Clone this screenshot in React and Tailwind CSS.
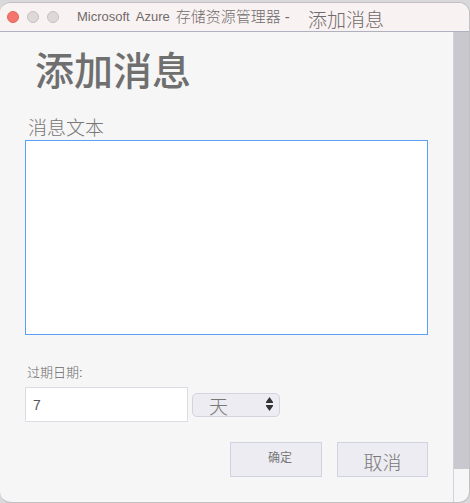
import React, { useState } from 'react'

const TitleBar = () => {
  return (
    <header className="flex h-[29px] items-start bg-[#f9f2f2] border-b border-[#afb1bf] pl-[7px]">
      <div className="flex gap-2 pt-2">
        <button type="button" aria-label="Close" className="size-3 rounded-full border border-[#e2645b] bg-[#f4756b]"></button>
        <button type="button" aria-label="Minimize" className="size-3 rounded-full border border-[#c8c1c1] bg-[#ded8d8]"></button>
        <button type="button" aria-label="Zoom" className="size-3 rounded-full border border-[#c8c1c1] bg-[#ded8d8]"></button>
      </div>
      <div className="flex items-start whitespace-nowrap pl-[18px] font-light text-[#6f6b6b]">
        <span className="flex gap-[6px] pt-1 text-[13px] leading-5">
          <span>Microsoft</span>
          <span>Azure</span>
          <span className="text-[15px]">存储资源管理器 -</span>
        </span>
        <span className="pl-[18px] pt-[6px] text-[19px] leading-6">添加消息</span>
      </div>
    </header>
  )
}

const UnitSelect = ({ value, onChange }) => {
  return (
    <div className="relative w-[88px]">
      <select
        aria-label="单位"
        value={value}
        onChange={onChange}
        className="block h-6 w-full appearance-none rounded-[5px] border border-[#d3d4e0] bg-[#edecf2] pl-4 pt-1 text-[19px] leading-5 font-light text-[#777]"
      >
        <option value="days">天</option>
      </select>
      <svg className="pointer-events-none absolute right-[7px] top-1" width="7" height="14" viewBox="0 0 7 14" fill="#333">
        <path d="M3.5 0 L7 5 V6 H0 V5 Z" />
        <path d="M3.5 14 L7 9 V8 H0 V9 Z" />
      </svg>
    </div>
  )
}

const App = () => {
  const [message, setMessage] = useState('')
  const [amount, setAmount] = useState('7')
  const [unit, setUnit] = useState('days')

  return (
    <div className="flex min-h-screen flex-col bg-[#d9d9dc] pt-[2px] font-['Liberation_Sans','Noto_Sans_CJK_SC',sans-serif]">
      <div className="flex flex-1 flex-col overflow-hidden rounded-[11px] border border-[#c3c0c4] border-l-0 bg-[#f6f6f6]">
        <TitleBar />
        <div className="flex flex-1">
          <main className="min-w-0 flex-1 px-[25px] pb-6">
            <h1 className="pl-[10px] pt-4 text-[39px] leading-12 font-medium text-[#6f6f6f]">添加消息</h1>

            <form onSubmit={(e) => e.preventDefault()}>
              <label htmlFor="message" className="block pl-[3px] pt-[22px] text-[19px] leading-[22px] font-light text-[#777]">
                消息文本
              </label>
              <textarea
                id="message"
                value={message}
                onChange={(e) => setMessage(e.target.value)}
                className="block h-[195px] w-full resize-none border border-[#5c9ff5] bg-white p-2 text-sm outline-none"
              />

              <label htmlFor="amount" className="block pl-[2px] pt-7 text-[13px] leading-5 font-light text-[#666]">
                过期日期:
              </label>
              <div className="flex items-center gap-1 pt-1">
                <input
                  id="amount"
                  type="text"
                  value={amount}
                  onChange={(e) => setAmount(e.target.value)}
                  className="h-[35px] w-[163px] border border-[#dcdce4] bg-white px-[7px] text-sm text-[#555] outline-none"
                />
                <UnitSelect value={unit} onChange={(e) => setUnit(e.target.value)} />
              </div>

              <div className="flex justify-end gap-[15px] pt-5">
                <button type="submit" className="h-[35px] w-[92px] border border-[#d0d3e0] bg-[#edecf2] pb-1 pl-2 text-xs text-[#777]">
                  确定
                </button>
                <button type="button" className="h-[35px] w-[91px] border border-[#d0d3e0] bg-[#edecf2] pt-2 text-[19px] leading-6 font-light text-[#777]">
                  取消
                </button>
              </div>
            </form>
          </main>

          {/* Scrollbar track */}
          <div className="w-4 border-l border-[#d0d2de]">
            <div className="h-[93%] bg-[#c8c8ce]"></div>
          </div>
        </div>
      </div>
    </div>
  )
}

export default App
